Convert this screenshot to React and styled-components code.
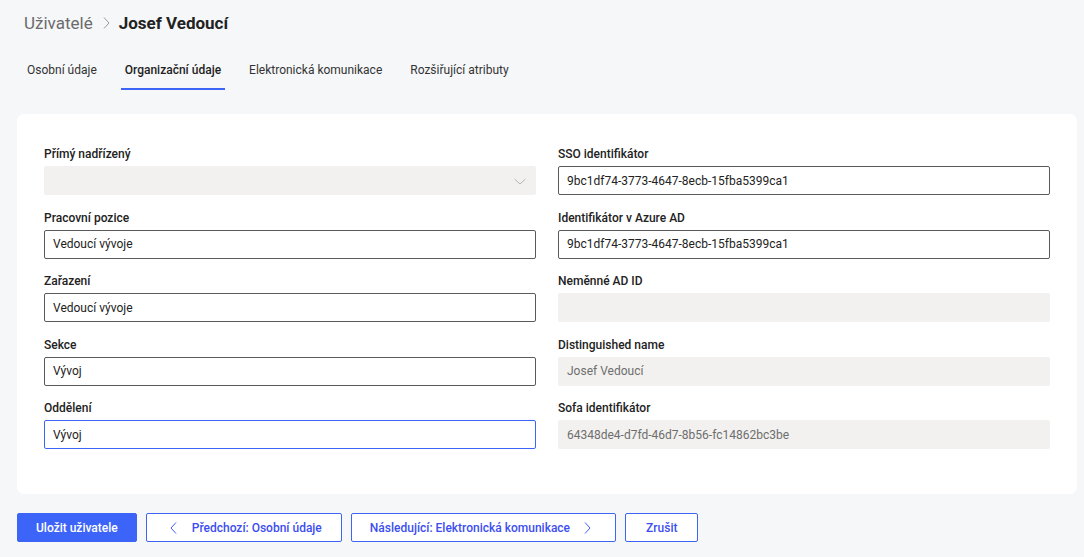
import React from "react";
import styled, { createGlobalStyle } from "styled-components";

const Global = createGlobalStyle`
  html, body { margin: 0; padding: 0; background: #f6f7f9; }
  body { font-family: Roboto, "Noto Sans", sans-serif; color: #1f1f1f; }
  * { box-sizing: border-box; }
`;

const Page = styled.div`
  padding: 12px 7px 0 17px;
  width: 1084px;
`;

const Breadcrumb = styled.div`
  display: flex;
  align-items: center;
  height: 22px;
  padding-left: 7px;
  font-size: 17px;
  gap: 5px;
`;

const Crumb = styled.span`
  color: #6b6b6b;
  margin-right: 1px;
`;

const Current = styled.span`
  font-weight: 700;
  color: #222;
  margin-left: 1px;
`;

const Tabs = styled.div`
  display: flex;
  gap: 20px;
  margin-top: 23px;
  padding-left: 6px;
`;

const Tab = styled.div`
  font-size: 12px;
  color: ${(p) => (p.$active ? "#1f1f1f" : "#333")};
  font-weight: ${(p) => (p.$active ? 500 : 400)};
  padding: 6px 4px 11px;
  border-bottom: 2px solid ${(p) => (p.$active ? "#3d64f5" : "transparent")};
`;

const Card = styled.div`
  margin-top: 24px;
  background: #fff;
  border-radius: 7px;
  padding: 32px 27px 45px;
  width: 1060px;
  display: grid;
  grid-template-columns: 492px 492px;
  column-gap: 22px;
`;

const Column = styled.div`
  display: flex;
  flex-direction: column;
  gap: 14.5px;
`;

const Field = styled.div`
  display: flex;
  flex-direction: column;
  gap: 4px;
`;

const Label = styled.label`
  font-size: 12px;
  font-weight: 500;
  color: #222;
  line-height: 16px;
`;

const Input = styled.div`
  height: 29px;
  display: flex;
  align-items: center;
  justify-content: space-between;
  padding: 0 8px;
  font-size: 12px;
  border-radius: 2px;
  color: ${(p) => (p.$disabled ? "#6e6e6e" : "#222")};
  background: ${(p) => (p.$disabled ? "#f2f1ef" : "#fff")};
  border: 1px solid
    ${(p) => (p.$focus ? "#3d64f5" : p.$disabled ? "#f2f1ef" : "#5a5a5a")};
`;

const Actions = styled.div`
  display: flex;
  gap: 9px;
  margin-top: 19px;
`;

const Button = styled.button`
  height: 29px;
  display: flex;
  align-items: center;
  gap: ${(p) => p.$gap || 11}px;
  padding: 0 ${(p) => p.$pr || 18}px 0 ${(p) => p.$pl || 18}px;
  font-family: inherit;
  font-size: 12px;
  font-weight: 500;
  border-radius: 2px;
  cursor: pointer;
  border: 1px solid #3d64f5;
  background: ${(p) => (p.$primary ? "#3d64f9" : "#fff")};
  color: ${(p) => (p.$primary ? "#fff" : "#3d4ef0")};
`;

const Chevron = ({ dir, color = "#3d64f5", size = 14 }) => {
  const d =
    dir === "left"
      ? "M9 1.5 L4 7 L9 12.5"
      : dir === "right"
      ? "M5 1.5 L10 7 L5 12.5"
      : "M1.5 5 L7 10 L12.5 5";
  return (
    <svg width={size} height={size} viewBox="0 0 14 14" fill="none">
      <path d={d} stroke={color} strokeWidth="1" />
    </svg>
  );
};

const left = [
  { label: "Přímý nadřízený", value: "", disabled: true, select: true },
  { label: "Pracovní pozice", value: "Vedoucí vývoje" },
  { label: "Zařazení", value: "Vedoucí vývoje" },
  { label: "Sekce", value: "Vývoj" },
  { label: "Oddělení", value: "Vývoj", focus: true },
];

const right = [
  { label: "SSO identifikátor", value: "9bc1df74-3773-4647-8ecb-15fba5399ca1" },
  { label: "Identifikátor v Azure AD", value: "9bc1df74-3773-4647-8ecb-15fba5399ca1" },
  { label: "Neměnné AD ID", value: "", disabled: true },
  { label: "Distinguished name", value: "Josef Vedoucí", disabled: true },
  { label: "Sofa identifikátor", value: "64348de4-d7fd-46d7-8b56-fc14862bc3be", disabled: true },
];

const renderField = (f) => (
  <Field key={f.label}>
    <Label>{f.label}</Label>
    <Input $disabled={f.disabled} $focus={f.focus}>
      <span>{f.value}</span>
      {f.select && <Chevron dir="down" color="#b5b5b5" size={14} />}
    </Input>
  </Field>
);

export default function App() {
  return (
    <Page>
      <Global />
      <Breadcrumb>
        <Crumb>Uživatelé</Crumb>
        <Chevron dir="right" color="#9a9a9a" size={14} />
        <Current>Josef Vedoucí</Current>
      </Breadcrumb>
      <Tabs>
        <Tab>Osobní údaje</Tab>
        <Tab $active>Organizační údaje</Tab>
        <Tab>Elektronická komunikace</Tab>
        <Tab>Rozšiřující atributy</Tab>
      </Tabs>
      <Card>
        <Column>{left.map(renderField)}</Column>
        <Column>{right.map(renderField)}</Column>
      </Card>
      <Actions>
        <Button $primary>Uložit uživatele</Button>
        <Button $pl={20} $pr={19}>
          <Chevron dir="left" />
          Předchozí: Osobní údaje
        </Button>
        <Button $gap={10} $pl={18} $pr={21}>
          Následující: Elektronická komunikace
          <Chevron dir="right" />
        </Button>
        <Button $pl={20} $pr={20}>Zrušit</Button>
      </Actions>
    </Page>
  );
}
